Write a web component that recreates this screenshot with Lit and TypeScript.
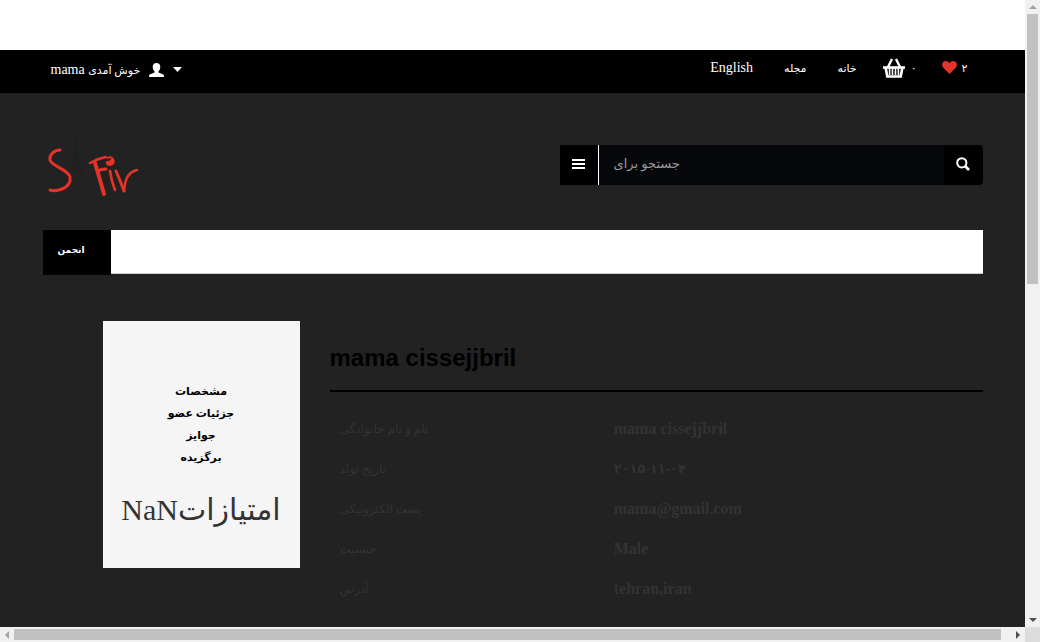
import { LitElement, html, css } from "lit";
import { customElement, property } from "lit/decorators.js";

@customElement("page-scrollbar")
class PageScrollbar extends LitElement {
  @property({ reflect: true }) direction = "vertical";
  @property({ type: Number }) thumb = 50;

  static styles = css`
    :host { display: flex; background: #f1f1f1; min-width: 0; min-height: 0; }
    :host([direction="vertical"]) { flex-direction: column; }
    .arrow { flex: 0 0 14px; display: flex; align-items: center; justify-content: center; }
    .track { flex: 1; min-width: 0; min-height: 0; padding: 0 2px; }
    :host([direction="horizontal"]) .track { padding: 2px 0; }
    .thumb { background: #c1c1c1; width: 100%; height: 100%; }
    svg { display: block; }
  `;

  render() {
    const vertical = this.direction === "vertical";
    const size = vertical ? `height:${this.thumb}%` : `width:${this.thumb}%`;
    return html`
      <div class="arrow">
        <svg width="8" height="8" fill="#a3a3a3"><path d=${vertical ? "M0 6h8L4 2z" : "M6 0v8L2 4z"} /></svg>
      </div>
      <div class="track"><div class="thumb" style=${size}></div></div>
      <div class="arrow">
        <svg width="8" height="8" fill="#505050"><path d=${vertical ? "M0 2h8L4 6z" : "M2 0v8l4-4z"} /></svg>
      </div>
    `;
  }
}

@customElement("app-root")
class AppRoot extends LitElement {
  rows = [
    ["نام و نام خانوادگی", "mama cissejjbril"],
    ["تاریخ تولد", "۲۰۱۵-۱۱-۰۴"],
    ["پست الکترونیکی", "mama@gmail.com"],
    ["جنسیت", "Male"],
    ["آدرس", "tehran,iran"],
  ];
  sections = ["مشخصات", "جزئیات عضو", "جوایز", "برگزیده"];

  static styles = css`
    :host {
      display: grid;
      grid-template-columns: minmax(0, 1fr) 15px;
      grid-template-rows: minmax(0, 1fr) 15px;
      height: 100vh;
      font: 14px/20px "Liberation Serif", "DejaVu Sans", serif;
      color: #333;
    }
    * { box-sizing: border-box; }
    .page { background: #222; overflow: hidden; }
    .corner { background: #dcdcdc; }
    .container { max-width: 970px; margin: 0 auto; padding: 0 15px; }
    .notice { height: 50px; background: #fff; }
    a { color: inherit; text-decoration: none; }
    button { border: 0; margin: 0; background: #000; color: #fff; font: inherit; cursor: pointer; }
    svg { display: block; }
    .fa { font-size: 11px; }

    .topbar { background: #000; color: #fff; }
    .topbar .container { display: flex; justify-content: space-between; height: 43px; }
    .user { display: flex; align-items: center; gap: 9px; padding: 0 8px 4px; }
    .links { display: flex; align-items: center; gap: 31px; padding: 0 15px 8px 0; }
    .count { display: flex; align-items: center; gap: 5px; }
    .shop { display: flex; align-items: center; gap: 25px; margin-left: -6px; }

    .header { display: flex; align-items: flex-start; justify-content: space-between; padding-top: 32px; padding-bottom: 25px; }
    .search { display: flex; width: 45%; height: 40px; margin-top: 20px; }
    .search button { display: flex; align-items: center; justify-content: center; flex: 0 0 39px; padding: 0 0 3px; }
    .search .menu { border-right: 1px solid #fff; }
    .search .go { border-radius: 0 4px 4px 0; }
    .search input {
      flex: 1; min-width: 0; border: 0; border-radius: 0; background: #07080c; color: #999;
      padding: 0 15px 2px; font: 13px/20px "Liberation Serif", "DejaVu Sans", serif;
    }
    .search input::placeholder { color: #999; opacity: 1; }

    .nav { display: flex; align-items: flex-start; }
    .tab { background: #000; color: #fff; font-size: 9px; font-weight: bold; padding: 10px 26px 15px 15px; }
    .bar { flex: 1; height: 44px; background: #fff; border-bottom: 1px solid #ccc; }

    .profile { display: flex; align-items: flex-start; gap: 30px; padding-top: 46px; padding-left: 60px; }
    .card { flex: 0 0 197px; background: #f5f5f5; padding: 59px 0 36px; text-align: center; }
    .card ul { list-style: none; margin: 0; padding: 0; color: #000; font-size: 11px; line-height: 22px; font-weight: bold; }
    .score { margin: 20px 0 0; font-size: 30px; line-height: 44px; white-space: nowrap; }
    .details { flex: 1; min-width: 0; padding-top: 22px; }
    h1 {
      margin: 0 0 17px; padding-bottom: 17px; border-bottom: 2px solid #000;
      font: bold 24px/30px "Liberation Sans", sans-serif; color: #000;
    }
    table { width: 100%; border-collapse: collapse; table-layout: fixed; }
    th, td { height: 40px; padding: 0 10px; text-align: left; vertical-align: middle; }
    th { width: 42%; font-weight: normal; font-size: 12px; }
    td { font-size: 16px; font-weight: bold; }
    .date { font-size: 13px; }
  `;

  render() {
    return html`
      <div class="page">
        <div class="notice"></div>
        <div class="topbar">
          <div class="container">
            <a class="user" href="#">
              <span>mama <span class="fa">خوش آمدی</span></span>
              <svg width="15" height="14" viewBox="0 0 15 14" fill="#fff"><path d="M7.500 0c2.300 0 3.800 1.500 3.800 4 0 1.800-.7 3.300-1.800 4.200v1.300l4.200 1.700C14.600 11.600 15 12.200 15 14H0c0-1.800.4-2.400 1.300-2.800l4.200-1.700V8.200C4.400 7.300 3.700 5.800 3.700 4c0-2.500 1.500-4 3.800-4z" /></svg>
              <svg width="9" height="5" fill="#fff"><path d="M0 0h9L4.500 5z" /></svg>
            </a>
            <nav class="links">
              <a href="#">English</a>
              <a class="fa" href="#">مجله</a>
              <a class="fa" href="#">خانه</a>
              <span class="shop">
                <a class="count" href="#" aria-label="سبد خرید">
                  <svg width="24" height="20" viewBox="0 0 24 20" fill="none" stroke="#fff">
                    <path d="M6 9l4-8M18 9l-4-8" stroke-width="2.400" />
                    <path d="M1 9.500h22" stroke-width="2.600" />
                    <path d="M3.500 9l1.800 9.500h13.400L20.500 9" stroke-width="2.600" />
                    <path d="M7.600 10v7M10.500 10v7M13.500 10v7M16.400 10v7" stroke-width="1.600" />
                  </svg>
                  <span class="fa">۰</span>
                </a>
                <a class="count" href="#" aria-label="علاقه‌مندی‌ها">
                  <svg width="15" height="13" viewBox="0 0 15 13" fill="#e6332a"><path d="M7.500 13L1.300 6.800C-.3 5.200-.3 2.600 1.200 1.100 2.900-.5 5.800-.3 7.500 2.300 9.200-.3 12.100-.5 13.800 1.100c1.500 1.500 1.500 4.100-.1 5.700z" /></svg>
                  <span class="fa">۲</span>
                </a>
              </span>
            </nav>
          </div>
        </div>

        <div class="container header">
          <a href="#" aria-label="Safir">
            <svg width="100" height="80" viewBox="0 0 100 80" fill="none" stroke="#e6332a" stroke-linecap="round" stroke-linejoin="round">
              <path d="M28 50C31 36 32 20 32 5c2 16 5 38 11 50 4 7 8 11 12 13-10-3-15-12-17-23-4-2-7 0-10 5z" fill="#231e20" stroke="none" />
              <path d="M17 25C11 25 6 30 7 35c1 6 18 9 20 17 1 6-3 10-8 12-5 2-9 2-12 1" stroke-width="3" />
              <path d="M47 38c5-3 10-5 16-6" stroke-width="2.600" />
              <path d="M52 38c3 10 6 20 9 31" stroke-width="4" />
              <path d="M55 46c3-2 6-2 8-2" stroke-width="3" />
              <path d="M66 37l4-3c2 3 0 6-3 6-2 0-4-1-3-3zM65 33c1-1 3-1 4 0" stroke-width="2" fill="#e6332a" />
              <path d="M67 46c1 7 3 14 5 19" stroke-width="2.600" />
              <path d="M73 46c3 7 6 14 8 20" stroke-width="3" />
              <path d="M81 66c1-9 2-18 13-21" stroke-width="2.600" />
            </svg>
          </a>
          <form class="search" role="search">
            <button class="menu" type="button" aria-label="منو">
              <svg width="13" height="10" viewBox="0 0 13 10" fill="#fff"><path d="M0 0h13v2H0zM0 4h13v2H0zM0 8h13v2H0z" /></svg>
            </button>
            <input type="text" placeholder="جستجو برای" aria-label="جستجو برای" />
            <button class="go" type="button" aria-label="جستجو">
              <svg width="14" height="14" viewBox="0 0 14 14" fill="none" stroke="#fff" stroke-width="2"><circle cx="5.800" cy="5.800" r="4.600" /><path d="M9 9l4 4" stroke-width="2.600" /></svg>
            </button>
          </form>
        </div>

        <div class="container">
          <nav class="nav"><a class="tab" href="#">انجمن</a><div class="bar"></div></nav>
          <main class="profile">
            <aside class="card">
              <ul>${this.sections.map((s) => html`<li><a href="#">${s}</a></li>`)}</ul>
              <p class="score">NaNامتیازات</p>
            </aside>
            <section class="details">
              <h1>mama cissejjbril</h1>
              <table>
                ${this.rows.map(([label, value]) => html`
                  <tr><th scope="row">${label}</th><td class=${/^[۰-۹]/.test(value) ? "date" : "text"}>${value}</td></tr>`)}
              </table>
            </section>
          </main>
        </div>
      </div>
      <page-scrollbar direction="vertical" .thumb=${45}></page-scrollbar>
      <page-scrollbar direction="horizontal" .thumb=${99}></page-scrollbar>
      <div class="corner"></div>
    `;
  }
}
